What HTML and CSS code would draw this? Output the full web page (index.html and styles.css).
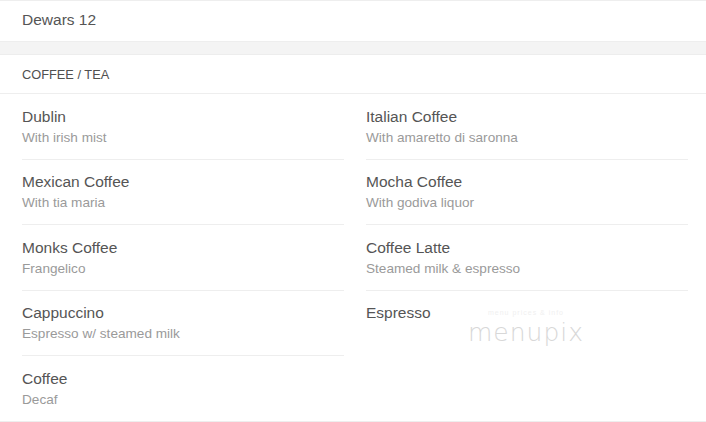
FILE: index.html
```html
<!DOCTYPE html>
<html>
<head>
<meta charset="utf-8">
<link rel="stylesheet" href="styles.css">
</head>
<body>
<div class="page">
  <div class="top-item">Dewars 12</div>
  <div class="band"></div>
  <div class="section-head">COFFEE / TEA</div>
  <div class="grid">
    <div class="col">
      <div class="item"><div class="name">Dublin</div><div class="desc">With irish mist</div></div>
      <div class="item"><div class="name">Mexican Coffee</div><div class="desc">With tia maria</div></div>
      <div class="item"><div class="name">Monks Coffee</div><div class="desc">Frangelico</div></div>
      <div class="item"><div class="name">Cappuccino</div><div class="desc">Espresso w/ steamed milk</div></div>
      <div class="item last"><div class="name">Coffee</div><div class="desc">Decaf</div></div>
    </div>
    <div class="col">
      <div class="item"><div class="name">Italian Coffee</div><div class="desc">With amaretto di saronna</div></div>
      <div class="item"><div class="name">Mocha Coffee</div><div class="desc">With godiva liquor</div></div>
      <div class="item"><div class="name">Coffee Latte</div><div class="desc">Steamed milk &amp; espresso</div></div>
      <div class="item last"><div class="name">Espresso</div></div>
    </div>
  </div>
  <div class="watermark"><span class="wm-small">menu prices &amp; info</span><span class="wm-big">menupix</span></div>
</div>
</body>
</html>
```
FILE: styles.css
```css
html, body {
  margin: 0;
  padding: 0;
  background: #fff;
}
body {
  font-family: "Liberation Sans", Arial, sans-serif;
  color: #555;
}
.page {
  position: relative;
  width: 706px;
  height: 422px;
  overflow: hidden;
}
.top-item {
  border-top: 1px solid #eee;
  padding: 8.5px 22px 11.5px;
  line-height: 20px;
  font-size: 15.5px;
  color: #555;
}
.band {
  height: 12px;
  background: #f4f4f4;
  border-top: 1px solid #eee;
  border-bottom: 1px solid #ededed;
}
.section-head {
  padding: 13px 22px 11px;
  line-height: 14px;
  font-size: 12.8px;
  color: #505050;
  border-bottom: 1px solid #eee;
}
.grid {
  display: grid;
  grid-template-columns: 1fr 1fr;
  column-gap: 22px;
  padding: 0 18px 0 22px;
  border-bottom: 1px solid #eee;
}
.item {
  padding: 12.5px 0 10px;
  border-bottom: 1px solid #eee;
}
.item.last {
  border-bottom: none;
}
.name {
  font-size: 15.5px;
  line-height: 20px;
  color: #555;
}
.desc {
  font-size: 13.6px;
  line-height: 22px;
  color: #9a9a9a;
}
.watermark {
  position: absolute;
  left: 468px;
  top: 308px;
  width: 116px;
  display: flex;
  flex-direction: column;
  align-items: center;
  pointer-events: none;
}
.wm-small {
  font-size: 7px;
  color: #f0f0f0;
  letter-spacing: 1px;
  line-height: 10px;
}
.wm-big {
  font-family: "DejaVu Sans", sans-serif;
  font-weight: 200;
  font-size: 25px;
  line-height: 30px;
  color: #d8d8d8;
  letter-spacing: 1px;
}
```
